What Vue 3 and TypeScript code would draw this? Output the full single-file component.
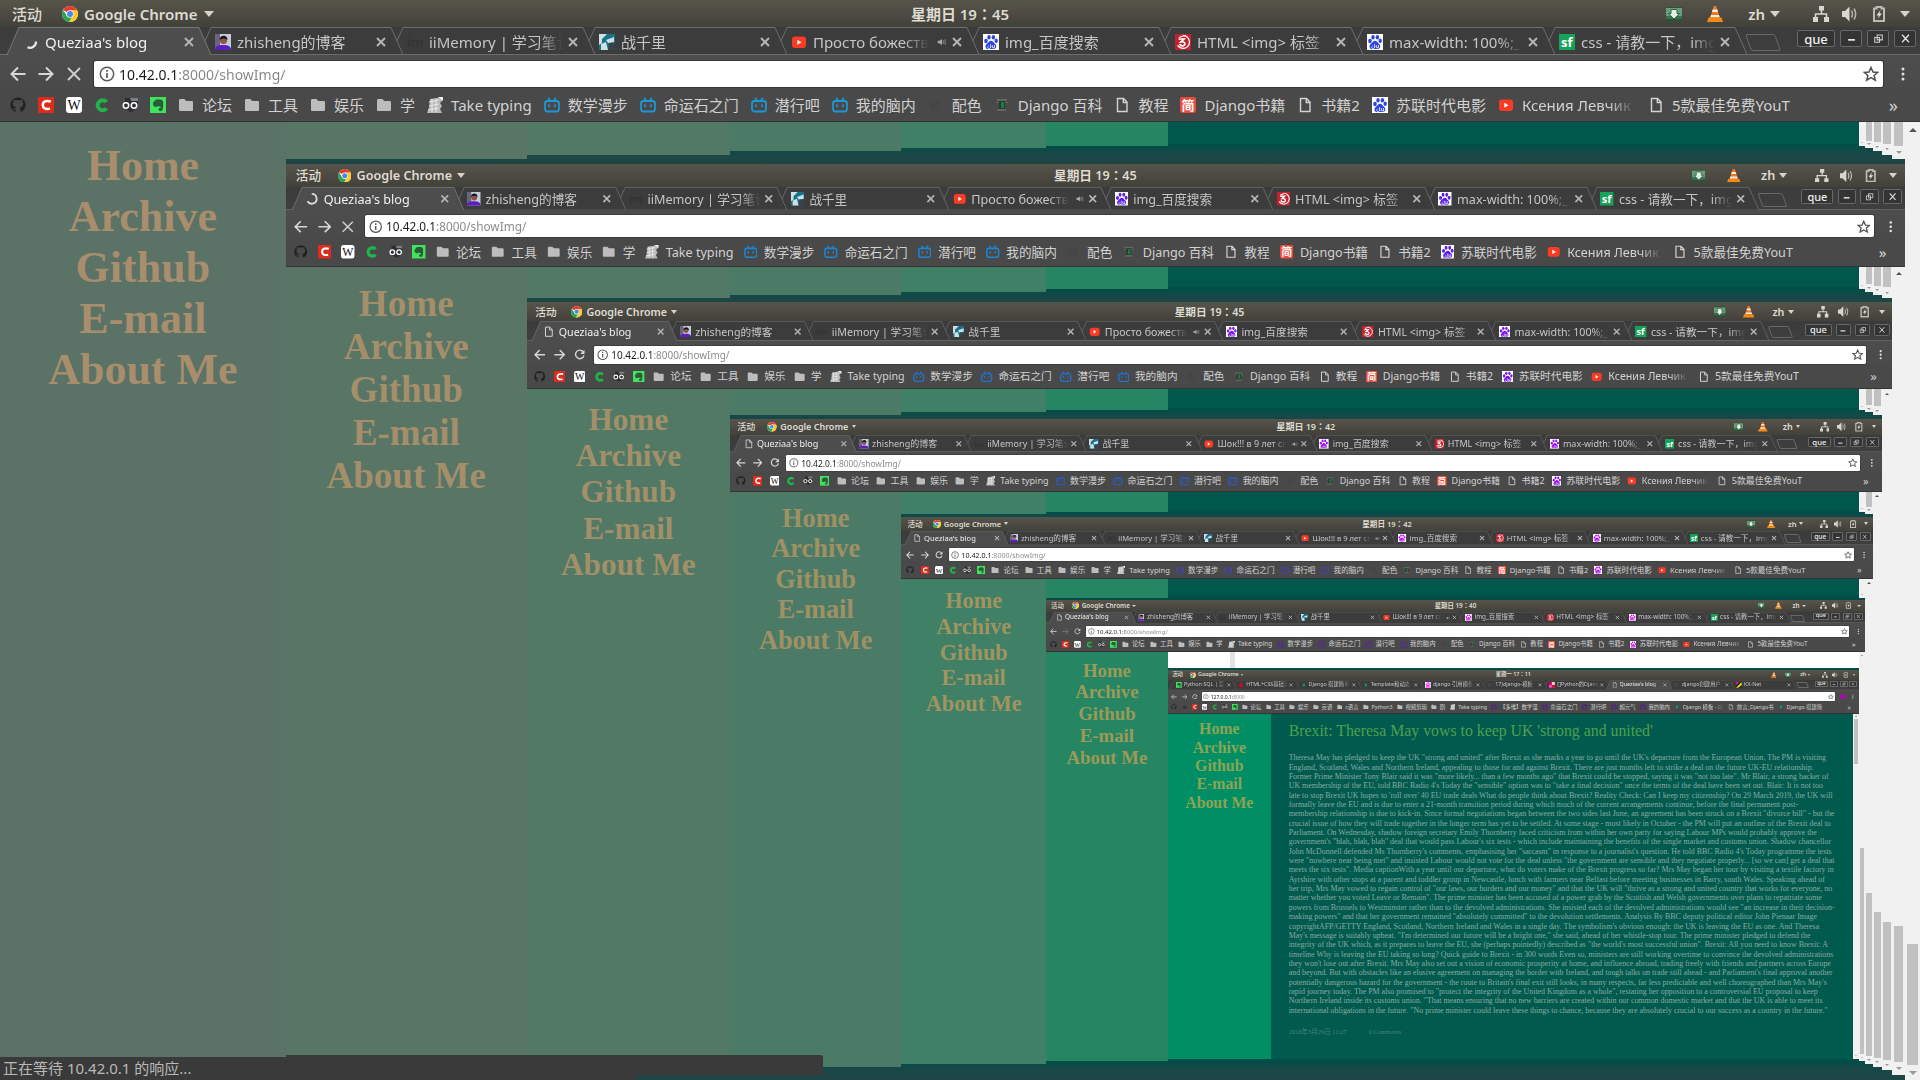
<script setup lang="ts">
import { computed, getCurrentInstance } from 'vue'

interface Tab { icon: string; title: string; sound?: boolean }
interface Bookmark { icon: string; label?: string }
interface Theme {
  aside: string
  link: string
  gap: string
  bili: string
  baidu: string
  clock: string
  thumbStart: number
  thumbSize: number
}

const props = withDefaults(defineProps<{ level?: number; tail?: boolean }>(), {
  level: 0,
  tail: false,
})

// Every desktop shows the next one inside its page, so the component renders itself.
const Self = getCurrentInstance()!.type
const LAST = 6

const themes: Theme[] = [
  { aside: '#5b7266', link: '#a88e6c', gap: '#1d4545', bili: '#1c97d6', baidu: '#2f45e0', clock: '星期日 19：45', thumbStart: 87, thumbSize: 13 },
  { aside: '#587566', link: '#a58f6a', gap: '#1b4746', bili: '#1d86d4', baidu: '#5a1ee8', clock: '星期日 19：45', thumbStart: 82.6, thumbSize: 17.4 },
  { aside: '#527866', link: '#a29068', gap: '#154847', bili: '#2273d0', baidu: '#7a12ee', clock: '星期日 19：45', thumbStart: 79.2, thumbSize: 20.8 },
  { aside: '#4b7b66', link: '#a09165', gap: '#0d4a48', bili: '#2b5ccc', baidu: '#960af2', clock: '星期日 19：42', thumbStart: 73.8, thumbSize: 26.2 },
  { aside: '#3f8066', link: '#a09460', gap: '#044c48', bili: '#4640c8', baidu: '#b800f4', clock: '星期日 19：42', thumbStart: 65.2, thumbSize: 34.8 },
  { aside: '#268664', link: '#9c9a58', gap: '#004f49', bili: '#5a20bc', baidu: '#e000fa', clock: '星期日 19：40', thumbStart: 47.8, thumbSize: 52.2 },
  { aside: '#008f64', link: '#8ca454', gap: '#005a4e', bili: '#5f0ab4', baidu: '#ff00ff', clock: '星期一 17：11', thumbStart: 0, thumbSize: 13.5 },
]

const theme = computed(() => themes[props.level])
const isLast = computed(() => props.level === LAST)
const isLoading = computed(() => props.level < 2)

const icons: Record<string, string> = {
  chrome: '<circle cx="8" cy="8" r="8" fill="#fff"/><path d="M8 8 1.1 4A8 8 0 0 1 14.9 4L15 4.4H8z" fill="#e33b2e"/><path d="M1.1 4A8 8 0 0 0 7.2 16L10.6 10 8 8 4.9 9.8z" fill="#2ba24c"/><path d="M15 4.3A8 8 0 0 1 7.2 16L11.2 9.6 8.3 4.3z" fill="#fdc921"/><circle cx="8" cy="8" r="3.8" fill="#f4f4f4"/><circle cx="8" cy="8" r="3" fill="#4688f1"/>',
  arc0: '<path d="M13 7.5A6 6 0 0 1 4.5 13.2" fill="none" stroke="#e8e8e8" stroke-width="2.2"/>',
  arc1: '<path d="M8 2.3A5.8 5.8 0 1 1 3 11" fill="none" stroke="#dcdcdc" stroke-width="2.2"/>',
  file: '<path d="M3.5 1.5h6l3.5 3.6v9.4h-9.5zM9.3 1.7v3.8h3.6" fill="none" stroke="#d4d4d4" stroke-width="1.4"/>',
  person: '<path d="M0 0h16v16H0z" fill="#c3cad8"/><path d="M0 0h5v16H0z" fill="#6a6480"/><path d="M0 16c0-4 3-5 8-5s8 1 8 5z" fill="#5d1ec0"/><circle cx="8.5" cy="6.5" r="3.5" fill="#8a5544"/><path d="M4.500 6c0-5 8-6 8 0-3-2-5-2-8 0z" fill="#17151c"/>',
  im: '<text x="0" y="13" font-family="Noto Sans" font-weight="700" font-size="13" fill="#343434">im</text>',
  fighter: '<path d="M0 0h16v16H0z" fill="#18708a"/><path d="M0 0h8L3 5v4L0 11zM7 6l8-3v5l-6 1zM2 10l5-2 2 8H2z" fill="#cfe0e4"/><path d="M10 9h6v7H9z" fill="#38424a"/>',
  youtube: '<rect x="1" y="2.5" width="14" height="11.5" rx="3" fill="#fc3b25"/><path d="M6.3 5.7v5l4.2-2.5z" fill="#fff"/>',
  baidu: '<path d="M0 0h16v16H0z" fill="#fff"/><g fill="var(--baidu)"><ellipse cx="3" cy="7" rx="1.8" ry="2.3"/><ellipse cx="6" cy="3.2" rx="1.7" ry="2.3"/><ellipse cx="10.4" cy="3.2" rx="1.7" ry="2.3"/><ellipse cx="13.2" cy="6.8" rx="1.7" ry="2.3"/><path d="M8 6.8c2 0 2.7 2 4.2 3.3 2 1.8 1 5-1.4 5-1.800 0-3.600-.5-5.500 0-3 .4-3.700-3.300-1.600-5C5.500 8.700 6 6.800 8 6.800z"/></g><path d="M5.500 12a1.400 1.400 0 1 0 2 1V10.300M9.300 11v2.800h2.200V11" fill="none" stroke="#fff" stroke-width=".8"/>',
  w3: '<path d="M0 0h16v16H0z" fill="#c5212c"/><path d="M8 1.500A6.500 6.500 0 0 1 8 14.500Q5 14.500 2.500 11.500M4 3.500 8 2" fill="none" stroke="#fff" stroke-width="1.300"/><path d="M3.500 5h5.500L6 7.800c5-.5 5 4.200 1.500 4-1.500 0-2.500-.8-3-1.800" fill="none" stroke="#fff" stroke-width="1.700"/>',
  sf: '<path d="M0 0h16v16H0z" fill="#17a25a"/><text x="2" y="13" font-family="Noto Sans" font-weight="700" font-size="13" fill="#fff">sf</text>',
  github: '<path d="M8 .5a7.500 7.500 0 0 0-2.500 14.600v-2.300c-2 .4-2.600-.9-3.200-2 1.300 0 1.500 1.200 3.300.9.100-.5.300-.9.600-1.200-2-.3-3.400-1.200-3.400-3.700 0-1 .3-1.700.8-2.300-.2-.7-.1-1.500.2-2.100.8 0 1.600.5 2.200.9a8 8 0 0 1 4 0c.6-.4 1.400-.9 2.200-.9.300.6.400 1.400.2 2.100.5.600.8 1.300.8 2.300 0 2.500-1.400 3.400-3.400 3.700.5.500.7 1 .7 1.900v2.700A7.500 7.500 0 0 0 8 .5z" fill="#202124"/>',
  cred: '<path d="M0 0h16v16H0z" fill="#dd2c1c"/><path d="M12.800 4.500C8 3 4.800 4.800 4.800 8s2.800 4.600 7.200 3.600" fill="none" stroke="#fff" stroke-width="2.500"/>',
  wiki: '<rect width="16" height="16" rx="3" fill="#fff"/><text x="8" y="13" text-anchor="middle" font-family="Liberation Serif" font-size="14" fill="#111">W</text>',
  cgreen: '<path d="M12.500 5A5 5 0 1 0 12.500 11.500" fill="none" stroke="#22b24c" stroke-width="4"/>',
  eyes: '<path d="M3 1h13v6H3zM3 8h11c0 9-10 9-11 0z" fill="#2b2f33"/><path d="M8 1h8v3H9z" fill="#7a8084"/><circle cx="4" cy="8.500" r="2.700" fill="#2b2f33" stroke="#fff" stroke-width="1.500"/><circle cx="12" cy="8.500" r="2.700" fill="#2b2f33" stroke="#fff" stroke-width="1.500"/>',
  evernote: '<path d="M0 0h16v16H0z" fill="#3fe45c"/><path d="M3 5.500 6 2.500c3 0 6.500-.5 7 2s.2 9-1.500 9.500-3.200-.3-3-2c.2-1.200 1.500-1 2-.8V9.500c-1.500 0-2.300.2-3-.5-.5 1.500-3 1-3.800 0S3 6.500 3 5.500z" fill="#2c5a3a"/>',
  folder: '<path d="M1 3.500C1 2.700 1.500 2 2.300 2h4l2 2h5.400c.8 0 1.300.5 1.300 1.300v7.400c0 .8-.5 1.300-1.300 1.300H2.300C1.500 14 1 13.500 1 12.700z" fill="#bdbdbd"/>',
  keys: '<path d="M3 2 16 0l-1 4-2 2 2 3-2 3 2 4H0l2-5z" fill="#b9b9b9"/><path d="M2 5l10-2M2 9l10-2M1 13l11-2M5 2v13M9 2v13" stroke="#e9e9e9" stroke-width="1"/><path d="M11 0h5v4z" fill="#efefef"/>',
  bili: '<path d="M4 .8 6.300 3.500M12 .8 9.700 3.500" stroke="var(--bili)" stroke-width="1.600"/><rect x="1" y="4" width="14" height="10.500" rx="2.500" fill="none" stroke="var(--bili)" stroke-width="1.800"/><path d="M5 7.500v2.500M11 7.500v2.500" stroke="var(--bili)" stroke-width="1.700"/>',
  blank: '<path d="M2 3h10v10H2z" fill="#464646"/>',
  bust: '<path d="M3 2h10v2H3zM2 5h12v1H2zM4 12h8v2H3z" fill="#666"/><path d="M5 4h6v8H5z" fill="#2b3a2e"/><path d="M7 5h3v6H7z" fill="#12803a"/>',
  jian: '<rect width="16" height="16" rx="2" fill="#ee4a3c"/><text x="8" y="13" text-anchor="middle" font-family="Noto Sans CJK SC" font-weight="700" font-size="13" fill="#fff">简</text>',
  drop: '<path d="M9 0c1 5 4 6 4 10a5 5 0 0 1-10 0c0-4 4-5 6-10z" fill="#e3001c"/>',
  diamond: '<path d="M8 3l4 5-4 5-4-5z" fill="#00a389"/>',
  checker: '<path d="M0 0h16v16H0z" fill="#f4d"/><path d="M0 0h8v8H0zM8 8h8v8H8z" fill="#e0003c"/><path d="M8 0h8v8H8z" fill="#d9e8a0"/>',
  kx: '<path d="M0 0h16v16H0z" fill="#222"/><path d="M0 16 16 0v8L6 16z" fill="#e8e000"/><path d="M0 0h9L0 9z" fill="#f0a"/>',
  cloud: '<path d="M1 12c0-4 3-4 3-4 1-5 8-4 8 0 4 0 4 5 1 5H3z" fill="#333"/>',
  back: '<path d="M15.500 8H2M8 1.500 1.500 8 8 14.500" fill="none" stroke="#d6d6d6" stroke-width="2"/>',
  forward: '<path d="M.5 8H14M8 1.500 14.500 8 8 14.500" fill="none" stroke="#d6d6d6" stroke-width="2"/>',
  stop: '<path d="M2 2l12 12M14 2 2 14" stroke="#d0d0d0" stroke-width="1.800"/>',
  reload: '<path d="M13 4A6 6 0 1 0 14 9" fill="none" stroke="#d6d6d6" stroke-width="2"/><path d="M14.800 1v6H8.800z" fill="#d6d6d6"/>',
  info: '<circle cx="8" cy="8" r="6.700" fill="none" stroke="#5a5a5a" stroke-width="1.500"/><path d="M8 7v5M8 4v1.800" stroke="#5a5a5a" stroke-width="1.700"/>',
  star: '<path d="M8 1.500l2 4.500 4.800.4-3.700 3.100 1.200 4.700L8 11.700l-4.300 2.500 1.200-4.700L1.200 6.400 6 6z" fill="none" stroke="#4f4f4f" stroke-width="1.500"/>',
  dots: '<g fill="#e2e2e2"><circle cx="8" cy="3" r="1.500"/><circle cx="8" cy="8" r="1.500"/><circle cx="8" cy="13" r="1.500"/></g>',
  close: '<path d="M4 4l8 8M12 4l-8 8" stroke="#b4b4b4" stroke-width="2"/>',
  sound: '<path d="M1 6h3l4-3v10L4 10H1z" fill="#a8a8a8"/><path d="M10 5v6M13 3.500v9" stroke="#8c8c8c" stroke-width="1.500"/>',
  inbox: '<path d="M0 1h16v14H0z" fill="#24543a"/><path d="M0 2h16v8H0z" fill="#6d9c7d"/><path d="M0 10h16v3H0z" fill="#3b6e4c"/><path d="M5 3.500h6v4h2.500L8 13 2.500 7.500H5z" fill="#e6efe8" stroke="#2c6b3e"/>',
  vlc: '<path d="M6.800 0h2.400l3.800 12H3z" fill="#f0781c"/><path d="M5.700 3.500h4.600l.8 2.500H4.900zM4 9h8l.7 2.200H3.300z" fill="#eee"/><path d="M1.500 11.500h13L16 16H0z" fill="#f58a10"/>',
  network: '<path d="M6 0h5v4.500H6zM0 11h5v5H0zM11 11h5v5h-5z" fill="#d8d6d0"/><path d="M8.500 4v4M2.500 12V8h11v4" fill="none" stroke="#d8d6d0" stroke-width="1.500"/>',
  volume: '<path d="M0 5h3l4.500-4.500v15L3 11H0z" fill="#d8d6d0"/><path d="M9.500 4.500q2 3.500 0 7M12 2.500q3.300 5.500 0 11" fill="none" stroke="#b8b6b0" stroke-width="1.500"/>',
  battery: '<path d="M5.500 1h5v1.500H13V15H3V2.500h2.500z" fill="none" stroke="#bdbbb4" stroke-width="2"/><path d="M9.500 4 5.500 9.500H8L6.500 13l4.500-5.500H8.500z" fill="#e2e0da"/>',
  circle: '<circle cx="8" cy="8" r="7.500" fill="#b400b8"/>',
}

const mainTabs = computed<Tab[]>(() => [
  { icon: props.level === 0 ? 'arc0' : props.level === 1 ? 'arc1' : 'file', title: "Queziaa's blog" },
  { icon: 'person', title: 'zhisheng的博客' },
  { icon: 'im', title: 'iiMemory | 学习笔记' },
  { icon: 'fighter', title: '战千里' },
  { icon: 'youtube', title: props.level < 3 ? 'Просто божественно' : 'Шок!!! в 9 лет спела', sound: true },
  { icon: 'baidu', title: 'img_百度搜索' },
  { icon: 'w3', title: 'HTML <img> 标签' },
  { icon: 'baidu', title: 'max-width: 100%;_百度' },
  { icon: 'sf', title: 'css - 请教一下，img标签' },
])

const lastTabs: Tab[] = [
  { icon: 'evernote', title: 'Python SQL | 菜鸟' },
  { icon: 'drop', title: 'HTML+CSS基础课' },
  { icon: 'diamond', title: 'Django 搭建简单' },
  { icon: 'diamond', title: 'Template和动态' },
  { icon: 'baidu', title: 'django 引用模板' },
  { icon: 'blank', title: '17)django-模板' },
  { icon: 'checker', title: '[]Python的Django' },
  { icon: 'file', title: "Queziaa's blog" },
  { icon: 'blank', title: 'django创建用户' },
  { icon: 'kx', title: 'KX-Net' },
]

const mainBookmarks: Bookmark[] = [
  { icon: 'github' }, { icon: 'cred' }, { icon: 'wiki' }, { icon: 'cgreen' }, { icon: 'eyes' }, { icon: 'evernote' },
  { icon: 'folder', label: '论坛' },
  { icon: 'folder', label: '工具' },
  { icon: 'folder', label: '娱乐' },
  { icon: 'folder', label: '学' },
  { icon: 'keys', label: 'Take typing' },
  { icon: 'bili', label: '数学漫步' },
  { icon: 'bili', label: '命运石之门' },
  { icon: 'bili', label: '潜行吧' },
  { icon: 'bili', label: '我的脑内' },
  { icon: 'blank', label: '配色' },
  { icon: 'bust', label: 'Django 百科' },
  { icon: 'file', label: '教程' },
  { icon: 'jian', label: 'Django书籍' },
  { icon: 'file', label: '书籍2' },
  { icon: 'baidu', label: '苏联时代电影' },
  { icon: 'youtube', label: 'Ксения Левчик - Y' },
  { icon: 'file', label: '5款最佳免费YouT' },
]

const lastBookmarks: Bookmark[] = [
  { icon: 'github' }, { icon: 'cloud' }, { icon: 'cred' }, { icon: 'wiki' }, { icon: 'cgreen' }, { icon: 'eyes' }, { icon: 'evernote' },
  { icon: 'folder', label: '论坛' },
  { icon: 'folder', label: '工具' },
  { icon: 'folder', label: '娱乐' },
  { icon: 'folder', label: '英语' },
  { icon: 'folder', label: 'c语言' },
  { icon: 'folder', label: 'Python3' },
  { icon: 'folder', label: '视频剪辑' },
  { icon: 'folder', label: '剧' },
  { icon: 'keys', label: 'Take typing' },
  { icon: 'bili', label: '【多维】数学漫' },
  { icon: 'bili', label: '命运石之门' },
  { icon: 'bili', label: '潜行吧' },
  { icon: 'bili', label: '超元气' },
  { icon: 'bili', label: '我的脑内' },
  { icon: 'diamond', label: 'Django 模板 - Dj' },
  { icon: 'file', label: '前言_Django书' },
  { icon: 'diamond', label: 'Django 搭建简' },
]

const tabs = computed(() => (isLast.value ? lastTabs : mainTabs.value))
const activeTab = computed(() => (isLast.value ? 7 : 0))
const bookmarks = computed(() => (isLast.value ? lastBookmarks : mainBookmarks))
const trayIcons = computed(() => (isLast.value ? ['vlc', 'inbox'] : ['inbox', 'vlc']))
const address = computed(() => (isLast.value ? '127.0.0.1:8000' : '10.42.0.1:8000/showImg/'))
const nav = ['Home', 'Archive', 'Github', 'E-mail', 'About Me']

const cssVars = computed(() => ({
  '--aside': theme.value.aside,
  '--link': theme.value.link,
  '--gap': theme.value.gap,
  '--bili': theme.value.bili,
  '--baidu': theme.value.baidu,
  '--tab': isLast.value ? '173px' : '192px',
}))

const article = `Theresa May has pledged to keep the UK "strong and united" after Brexit as she marks a year to go until the UK's departure from the European Union. The PM is visiting
England, Scotland, Wales and Northern Ireland, appealing to those for and against Brexit. There are just months left to strike a deal on the future UK-EU relationship.
Former Prime Minister Tony Blair said it was "more likely... than a few months ago" that Brexit could be stopped, saying it was "not too late". Mr Blair, a strong backer of
UK membership of the EU, told BBC Radio 4's Today the "sensible" option was to "take a final decision" once the terms of the deal have been set out. Blair: It is not too
late to stop Brexit UK hopes to 'roll over' 40 EU trade deals What do people think about Brexit? Reality Check: Can I keep my citizenship? On 29 March 2019, the UK will
formally leave the EU and is due to enter a 21-month transition period during which much of the current arrangements continue, before the final permanent post-
membership relationship is due to kick-in. Since formal negotiations began between the two sides last June, an agreement has been struck on a Brexit "divorce bill" - but the
crucial issue of how they will trade together in the longer term has yet to be settled. At some stage - most likely in October - the PM will put an outline of the Brexit deal to
Parliament. On Wednesday, shadow foreign secretary Emily Thornberry faced criticism from within her own party for saying Labour MPs would probably approve the
government's "blah, blah, blah" deal that would pass Labour's six tests - which include maintaining the benefits of the single market and customs union. Shadow chancellor
John McDonnell defended Ms Thornberry's comments, emphasising her "sarcasm" in response to a journalist's question. He told BBC Radio 4's Today programme the tests
were "nowhere near being met" and insisted Labour would not vote for the deal unless "the government are sensible and they negotiate properly... [so we can] get a deal that
meets the six tests". Media captionWith a year until our departure, what do voters make of the Brexit progress so far? Mrs May began her tour by visiting a textile factory in
Ayrshire with other stops at a parent and toddler group in Newcastle, lunch with farmers near Belfast before meeting businesses in Barry, south Wales. Speaking ahead of
her trip, Mrs May vowed to regain control of "our laws, our borders and our money" and that the UK will "thrive as a strong and united country that works for everyone, no
matter whether you voted Leave or Remain". The prime minister has been accused of a power grab by the Scottish and Welsh governments over plans to repatriate some
powers from Brussels to Westminster rather than to the devolved administrations. She insisted each of the devolved administrations would see "an increase in their decision-
making powers" and that her government remained "absolutely committed" to the devolution settlements. Analysis By BBC deputy political editor John Pienaar Image
copyrightAFP/GETTY England, Scotland, Northern Ireland and Wales in a single day. The symbolism's obvious enough: the UK is leaving the EU as one. And Theresa
May's message is suitably upbeat. "I'm determined our future will be a bright one," she said, ahead of her whistle-stop tour. The prime minister pledged to defend the
integrity of the UK which, as it prepares to leave the EU, she (perhaps pointedly) described as "the world's most successful union". Brexit: All you need to know Brexit: A
timeline Why is leaving the EU taking so long? Quick guide to Brexit - in 300 words Even so, ministers are still working overtime to convince the devolved administrations
they won't lose out after Brexit. Mrs May also set out a vision of economic prosperity at home, and influence abroad, trading freely with friends and partners across Europe
and beyond. But with obstacles like an elusive agreement on managing the border with Ireland, and tough talks on trade still ahead - and Parliament's final approval another
potentially dangerous hazard for the government - the route to Britain's final exit still looks, in many respects, far less predictable and well choreographed than Mrs May's
rapid journey today. The PM also promised to "protect the integrity of the United Kingdom as a whole", restating her opposition to a controversial EU proposal to keep
Northern Ireland inside its customs union. "That means ensuring that no new barriers are created within our common domestic market and that the UK is able to meet its
international obligations in the future. "No prime minister could leave these things to chance, because they are absolutely crucial to our success as a country in the future."`
</script>

<template>
  <div v-if="tail" class="tail" :style="cssVars">
    <div class="tail-aside"></div>
    <div class="tail-main">
      <div class="tail-fill">
        <component :is="Self" v-if="level < LAST - 1" :level="level + 1" tail />
      </div>
      <div class="gap"></div>
    </div>
    <div class="scrollbar">
      <div class="tail-track"><div v-if="level < LAST - 1" class="thumb"></div></div>
      <div class="arrow"><i class="down"></i></div>
    </div>
  </div>

  <div v-else class="desktop" :class="{ nested: level > 0 }" :style="cssVars">
    <header class="topbar">
      <div class="top-left">
        <span class="activities">活动</span>
        <svg class="icon" viewBox="0 0 16 16" v-html="icons.chrome"></svg>
        <span class="app-name">Google Chrome</span>
        <i class="caret"></i>
      </div>
      <time class="clock">{{ theme.clock }}</time>
      <div class="top-right">
        <svg v-for="name in trayIcons" :key="name" class="icon tray" viewBox="0 0 16 16" v-html="icons[name]"></svg>
        <span class="lang">zh <i class="caret"></i></span>
        <svg class="icon" viewBox="0 0 16 16" v-html="icons.network"></svg>
        <svg class="icon" viewBox="0 0 16 16" v-html="icons.volume"></svg>
        <svg class="icon" viewBox="0 0 16 16" v-html="icons.battery"></svg>
        <i class="caret"></i>
      </div>
    </header>

    <div class="tabstrip">
      <div
        v-for="(tab, i) in tabs"
        :key="i"
        class="tab"
        :class="{ active: i === activeTab }"
        :style="{ zIndex: i === activeTab ? 20 : 12 - i }"
      >
        <svg class="tab-shape" viewBox="0 0 204 28" preserveAspectRatio="none">
          <path v-if="i === activeTab" d="M0 28 12 .5H192L204 28" fill="#4d4d4d" stroke="#777" />
          <path v-else d="M0 27.500 12 .5H192L204 27.500z" fill="#3c3c3c" stroke="#6c6c6c" />
        </svg>
        <svg class="icon" viewBox="0 0 16 16" v-html="icons[tab.icon]"></svg>
        <button class="tab-title">{{ tab.title }}</button>
        <svg v-if="tab.sound" class="icon sound" viewBox="0 0 16 16" v-html="icons.sound"></svg>
        <button class="tab-close" aria-label="Close tab">
          <svg class="icon" viewBox="0 0 16 16" v-html="icons.close"></svg>
        </button>
      </div>
      <button class="new-tab" aria-label="New tab"></button>
      <div class="window-controls">
        <button class="profile">que</button>
        <button class="control" aria-label="Minimize">
          <svg viewBox="0 0 16 16" class="glyph"><path d="M3 10h10" stroke="#e6e6e6" stroke-width="2.500" /></svg>
        </button>
        <button class="control" aria-label="Restore">
          <svg viewBox="0 0 16 16" class="glyph"><path d="M6 3h7.500v7H6zM2.500 6.500h7v7h-7z" fill="none" stroke="#d0d0d0" stroke-width="1.500" /></svg>
        </button>
        <button class="control" aria-label="Close">
          <svg viewBox="0 0 16 16" class="glyph"><path d="M3 2.500l10 11M13 2.500l-10 11" stroke="#e6e6e6" stroke-width="1.800" /></svg>
        </button>
      </div>
    </div>

    <div class="toolbar">
      <button class="tool" aria-label="Back"><svg class="icon" viewBox="0 0 16 16" v-html="icons.back"></svg></button>
      <button class="tool" :class="{ dim: level === 5 }" aria-label="Forward"><svg class="icon" viewBox="0 0 16 16" v-html="icons.forward"></svg></button>
      <button class="tool" aria-label="Reload"><svg class="icon" viewBox="0 0 16 16" v-html="isLoading ? icons.stop : icons.reload"></svg></button>
      <div class="omnibox">
        <svg class="icon" viewBox="0 0 16 16" v-html="icons.info"></svg>
        <input class="address" type="text" aria-label="Address" :value="address" />
        <svg class="icon" viewBox="0 0 16 16" v-html="icons.star"></svg>
      </div>
      <svg v-if="isLast" class="icon" viewBox="0 0 16 16" v-html="icons.circle"></svg>
      <button class="tool" aria-label="Menu"><svg class="icon" viewBox="0 0 16 16" v-html="icons.dots"></svg></button>
    </div>

    <nav class="bookmarks">
      <a v-for="(mark, i) in bookmarks" :key="i" href="#" class="bookmark" :aria-label="mark.label ?? mark.icon">
        <svg class="icon" viewBox="0 0 16 16" v-html="icons[mark.icon]"></svg>
        <span v-if="mark.label" class="bookmark-label" :class="{ faded: mark.label.length > 11 }">{{ mark.label }}</span>
      </a>
      <button class="more" aria-label="More bookmarks">»</button>
    </nav>

    <div class="page">
      <aside class="aside">
        <a v-for="item in nav" :key="item" href="#" class="nav-link">{{ item }}</a>
      </aside>

      <article v-if="isLast" class="article">
        <h1 class="headline">Brexit: Theresa May vows to keep UK 'strong and united'</h1>
        <p class="text">{{ article }}</p>
        <footer class="meta"><span>2018年3月29日 11:27</span><span>0 Comments</span></footer>
      </article>
      <main v-else class="shots">
        <div class="slot" :class="{ blank: level === LAST - 1 }">
          <component :is="Self" v-if="level < LAST - 1" :level="level + 1" tail />
        </div>
        <div class="gap"></div>
        <component :is="Self" :level="level + 1" />
        <div class="gap"></div>
      </main>

      <div class="scrollbar">
        <div class="arrow"><i class="up"></i></div>
        <div class="track">
          <div :style="{ height: theme.thumbStart + '%' }"></div>
          <div class="thumb" :style="{ height: theme.thumbSize + '%' }"></div>
        </div>
        <div class="arrow"><i class="down"></i></div>
      </div>
    </div>

    <div v-if="isLoading" class="status">{{ level === 0 ? '正在等待 10.42.0.1 的响应...' : '' }}</div>
  </div>
</template>

<style>
html,
body {
  margin: 0;
  background: #1d4545;
}
</style>

<style scoped>
.desktop,
.tail {
  box-sizing: border-box;
  font-family: "Noto Sans", "Noto Sans CJK SC", sans-serif;
  font-size: 15px;
  line-height: 20px;
  color: #d2d2d2;
}
.desktop {
  position: relative;
  display: flex;
  flex-direction: column;
  height: 100vh;
  overflow: hidden;
}
.desktop.nested {
  zoom: 0.8433;
  height: auto;
  min-height: 0;
  flex: none;
  aspect-ratio: 16 / 9;
}
button {
  margin: 0;
  padding: 0;
  border: 0;
  background: none;
  color: inherit;
  font: inherit;
}
a {
  color: inherit;
  text-decoration: none;
}
.icon {
  display: block;
  flex: none;
  width: 16px;
  height: 16px;
}

/* Desktop bar */
.topbar {
  display: grid;
  grid-template-columns: 1fr auto 1fr;
  align-items: center;
  flex: none;
  height: 27px;
  background: linear-gradient(#57544a, #42413a);
  color: #dedbd2;
  font-weight: 600;
  white-space: nowrap;
}
.clock {
  font-family: "Noto Sans", "Noto Sans CJK TC", sans-serif;
}
.top-left,
.top-right {
  display: flex;
  align-items: center;
}
.top-left {
  padding-left: 12px;
}
.activities {
  margin-right: 20px;
  font-weight: 500;
}
.app-name {
  margin: 0 6px;
}
.top-right {
  justify-content: flex-end;
  gap: 13px;
  padding-right: 10px;
}
.tray {
  margin-right: 12px;
}
.lang {
  display: flex;
  align-items: center;
  gap: 5px;
  margin-right: 20px;
}
.caret {
  width: 0;
  height: 0;
  border: 5px solid transparent;
  border-top: 6px solid #d6d3ca;
  border-bottom: 0;
}

/* Tabs */
.tabstrip {
  position: relative;
  display: flex;
  flex: none;
  height: 28px;
  padding: 0 4px 0 7px;
  background: linear-gradient(#3b3b3b, #3f3f3f);
  box-shadow: inset 0 -1px #6c6c6c;
}
.tab {
  position: relative;
  display: flex;
  align-items: center;
  flex: 0 1 var(--tab);
  min-width: 0;
  box-sizing: border-box;
  padding: 1px 2px 0 16px;
}
.tab-shape {
  position: absolute;
  top: 0;
  left: 0;
  width: calc(100% + 12px);
  height: 28px;
}
.tab > .icon,
.tab-title,
.tab-close {
  position: relative;
}
.tab-title {
  flex: 1;
  min-width: 0;
  margin-left: 6px;
  overflow: hidden;
  white-space: nowrap;
  text-align: left;
  color: #c6c6c6;
  mask-image: linear-gradient(90deg, #000 calc(100% - 24px), transparent);
}
.active .tab-title {
  color: #f0f0f0;
}
.tab-close {
  margin-left: 2px;
}
.sound {
  width: 10px;
  height: 14px;
  margin-left: 8px;
}
.new-tab {
  width: 30px;
  height: 17px;
  margin: 7px 0 0 13px;
  border: 1px solid #686868;
  border-radius: 3px;
  transform: skewX(20deg);
}
.window-controls {
  display: flex;
  gap: 5px;
  height: 17px;
  margin: 3px 0 0 auto;
}
.profile,
.control {
  display: flex;
  align-items: center;
  justify-content: center;
  box-sizing: border-box;
  width: 22px;
  border: 1px solid #686868;
  border-radius: 2px;
  background: #343434;
}
.profile {
  width: 38px;
  color: #eee;
  font-size: 13px;
  line-height: 14px;
  font-weight: 500;
}
.glyph {
  width: 11px;
  height: 11px;
}

/* Address row */
.toolbar {
  display: flex;
  align-items: center;
  gap: 12px;
  flex: none;
  box-sizing: border-box;
  height: 33px;
  padding: 5px 9px 0 10px;
  background: linear-gradient(#4d4d4d, #4a4a4a);
}
.dim {
  opacity: 0.3;
}
.omnibox {
  display: flex;
  align-items: center;
  flex: 1;
  height: 26px;
  padding: 0 4px 0 5px;
  border-radius: 2px;
  background: #fff;
  box-shadow: 0 0 0 1px #383838;
}
.address {
  flex: 1;
  min-width: 0;
  height: 22px;
  margin-left: 4px;
  padding: 0;
  border: 0;
  outline: 0;
  font: inherit;
  font-size: 14px;
  color: transparent;
  background: linear-gradient(90deg, #1a1a1a 60px, #858585 60px);
  background-clip: text;
  -webkit-background-clip: text;
}

/* Bookmarks */
.bookmarks {
  display: flex;
  align-items: center;
  gap: 12px;
  flex: none;
  box-sizing: border-box;
  height: 34px;
  padding: 0 22px 0 10px;
  background: #494949;
  border-bottom: 1px solid #343434;
  white-space: nowrap;
}
.bookmark {
  display: flex;
  align-items: center;
  gap: 8px;
  flex: none;
}
.faded {
  width: 114px;
  overflow: hidden;
  mask-image: linear-gradient(90deg, #000 calc(100% - 28px), transparent);
}
.more {
  margin-left: auto;
  font-size: 18px;
}

/* Page */
.page {
  display: flex;
  flex: 1;
  min-height: 0;
  background: var(--gap);
}
.aside {
  display: flex;
  flex-direction: column;
  align-items: center;
  flex: 15 1 0;
  min-width: 0;
  padding-top: 18px;
  background: var(--aside);
  color: var(--link);
  font: 700 44px/51px "Liberation Serif", serif;
}
.nav-link {
  white-space: nowrap;
}
.shots {
  flex: 85 1 0;
  min-width: 0;
  display: flex;
  flex-direction: column;
}
.slot {
  display: flex;
  flex: none;
  height: 37px;
  overflow: hidden;
  background: #00584d;
}
.slot.blank {
  background: linear-gradient(90deg, #fff 146px, #dfe6df 146px, #dfe6df 156px, #fff 156px);
}
.gap {
  flex: none;
  height: 5px;
  background: var(--gap);
}
.tail {
  zoom: 0.8433;
  display: flex;
  flex: 1;
  min-width: 0;
}
.tail-aside {
  flex: 15 1 0;
  background: var(--aside);
}
.tail-main {
  display: flex;
  flex-direction: column;
  flex: 85 1 0;
  min-width: 0;
}
.tail-fill {
  display: flex;
  flex: 1;
  min-height: 0;
  background: #00584d;
}
.tail-track {
  display: flex;
  justify-content: center;
  flex: 1;
}
.article {
  flex: 85 1 0;
  min-width: 0;
  padding-top: 22px;
  overflow: hidden;
  background: #005a4e;
  font-family: "Liberation Serif", "Noto Sans CJK SC", serif;
  white-space: nowrap;
}
.headline {
  margin: 0 0 37px 50px;
  color: #4ea04e;
  font-size: 44px;
  line-height: 51px;
  font-weight: 400;
}
.text {
  margin: 0 0 36px 50px;
  color: #8aaba3;
  font-size: 22px;
  line-height: 26px;
  white-space: pre;
}
.meta {
  display: flex;
  gap: 60px;
  margin-left: 50px;
  color: #4b8378;
  font-size: 18px;
  line-height: 24px;
}

/* Scrollbar */
.scrollbar {
  display: flex;
  flex-direction: column;
  flex: none;
  width: 15px;
  background: #f1f1f1;
}
.track {
  display: flex;
  flex-direction: column;
  align-items: center;
  flex: 1;
  min-height: 0;
}
.thumb {
  width: 11px;
  background: #c1c1c1;
}
.arrow {
  display: flex;
  align-items: center;
  justify-content: center;
  height: 15px;
}
.up,
.down {
  width: 0;
  height: 0;
  border: 4px solid transparent;
}
.up {
  border-top: 0;
  border-bottom-color: #555;
}
.down {
  border-bottom: 0;
  border-top-color: #999;
}

.status {
  position: absolute;
  left: 0;
  bottom: 0;
  z-index: 30;
  box-sizing: border-box;
  width: 33.2%;
  height: 23px;
  padding: 1px 3px;
  background: #3a3a3a;
  border-radius: 0 3px 0 0;
  color: #b8b8b8;
}
</style>
